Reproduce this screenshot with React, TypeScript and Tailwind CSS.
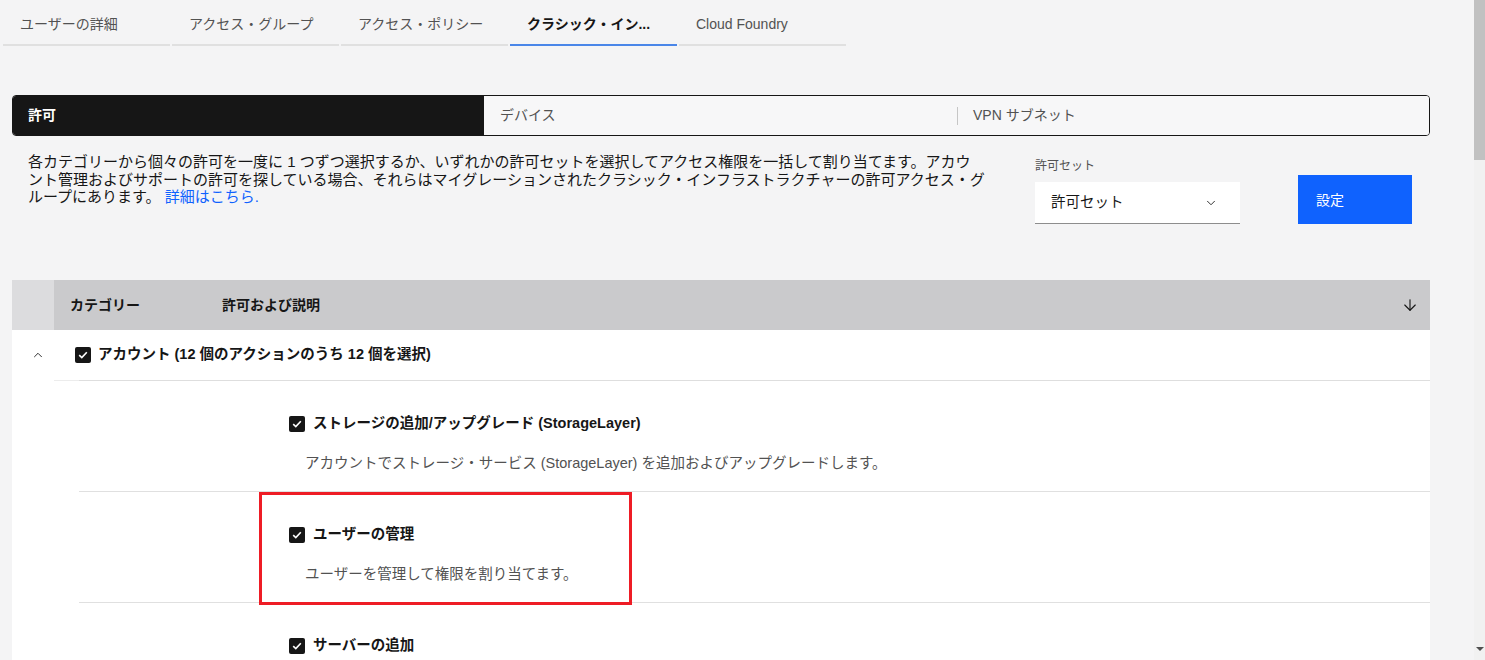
import { ArrowDown, ChevronDown, ChevronUp } from "lucide-react";

const font = "font-['Liberation_Sans','Noto_Sans_CJK_JP',sans-serif]";

const tabs = ["ユーザーの詳細", "アクセス・グループ", "アクセス・ポリシー", "クラシック・イン...", "Cloud Foundry"];

const Check = () => (
  <span className="flex h-[16px] w-[16px] shrink-0 items-center justify-center rounded-[2px] bg-[#161616]">
    <svg width="10" height="8" viewBox="0 0 10 8" fill="none">
      <path d="M1.2 4.2 3.8 6.6 8.8 1.2" stroke="#fff" strokeWidth="1.6" />
    </svg>
  </span>
);

const SubRow = ({ title, desc, marked }: { title: string; desc?: string; marked?: boolean }) => (
  <div className="relative ml-[67px] shrink-0 border-b border-[#e0e0e0] pb-[17px] pl-[210px] pt-[33px]">
    {/* annotation box over the row */}
    {marked && <div className="absolute left-[180px] top-0 h-[113px] w-[373px] border-[3px] border-[#ee1c25]" />}
    <div className="flex h-[20px] items-center gap-[8px] text-[14.5px] font-semibold text-[#161616]">
      <Check />
      <span>{title}</span>
    </div>
    {desc && <div className="mt-[20px] flex h-[20px] items-center pl-[16px] text-[14.5px] text-[#525252]">{desc}</div>}
  </div>
);

export default function App() {
  return (
    <div className={`flex h-[660px] w-full overflow-hidden bg-[#f4f4f5] ${font}`}>
      <div className="flex min-w-0 flex-1 flex-col">
        {/* Tabs */}
        <div className="flex shrink-0 gap-[2px] pl-[3px]">
          {tabs.map((t, i) => (
            <div
              key={t}
              className={`flex h-[46px] w-[167px] items-center border-b-2 px-[17px] pt-[4px] text-[14px] ${
                i === 3 ? "border-[#4a86e8] font-semibold text-[#161616]" : "border-[#e0e0e0] text-[#525252]"
              }`}
            >
              <span className="whitespace-nowrap">{t}</span>
            </div>
          ))}
        </div>

        {/* Content switcher */}
        <div className="ml-[12px] mr-[44px] mt-[49px] flex h-[41px] shrink-0 overflow-hidden rounded-[4px] border border-[#161616] text-[14px]">
          <div className="flex w-[471px] shrink-0 items-center bg-[#161616] pl-[15px] font-semibold text-white">許可</div>
          <div className="flex w-[473px] shrink-0 items-center bg-[#f7f7f8] pl-[16px] text-[#525252]">デバイス</div>
          <div className="flex min-w-0 flex-1 items-center bg-[#f7f7f8] text-[#525252]">
            <span className="mr-[15px] h-[18px] w-px bg-[#c6c6c6]" />
            VPN サブネット
          </div>
        </div>

        {/* Description + permission set */}
        <div className="flex h-[144px] shrink-0 items-start pl-[28px]">
          <div className="mt-[17px] w-[1007px] text-[15px] leading-[17.5px] text-[#161616]">
            <div className="whitespace-nowrap">
              各カテゴリーから個々の許可を一度に 1 つずつ選択するか、いずれかの許可セットを選択してアクセス権限を一括して割り当てます。アカウ
            </div>
            <div className="whitespace-nowrap">
              ント管理およびサポートの許可を探している場合、それらはマイグレーションされたクラシック・インフラストラクチャーの許可アクセス・グ
            </div>
            <div className="whitespace-nowrap">
              ループにあります。 <span className="text-[#0f62fe]">詳細はこちら.</span>
            </div>
          </div>
          <div className="mt-[22px] flex flex-col">
            <span className="h-[16px] text-[12px] leading-[16px] text-[#525252]">許可セット</span>
            <div className="mt-[8px] flex h-[42px] w-[205px] items-center justify-between border-b border-[#8d8d8d] bg-white pl-[16px] pr-[22px] text-[14.5px] text-[#161616]">
              許可セット
              <ChevronDown size={14} strokeWidth={1.5} className="text-[#161616]" />
            </div>
          </div>
          <div className="ml-[58px] mt-[39px] flex h-[49px] w-[114px] items-start bg-[#0f62fe] pl-[18px] pt-[15px] text-[14px] text-white">
            設定
          </div>
        </div>

        {/* Table */}
        <div className="ml-[12px] mr-[44px] flex shrink-0 flex-col bg-white">
          <div className="flex h-[50px] shrink-0 items-center bg-[#cacacc] text-[14px] font-semibold text-[#161616]">
            <div className="h-full w-[42px] bg-[#dcdcde]" />
            <span className="w-[168px] pl-[16px]">カテゴリー</span>
            <span className="flex-1">許可および説明</span>
            <ArrowDown size={18} strokeWidth={1.5} className="mr-[11px] text-[#161616]" />
          </div>
          <div className="flex h-[50px] shrink-0 items-center text-[14.5px] font-semibold text-[#161616]">
            <div className="flex w-[52px] justify-center">
              <ChevronUp size={14} strokeWidth={1.5} />
            </div>
            <div className="ml-[11px] flex items-center gap-[7px]">
              <Check />
              <span>アカウント (12 個のアクションのうち 12 個を選択)</span>
            </div>
          </div>
          <div className="ml-[42px] flex h-px shrink-0">
            <div className="w-[25px] bg-[#ececec]" />
            <div className="flex-1 bg-[#dedede]" />
          </div>
          <SubRow
            title="ストレージの追加/アップグレード (StorageLayer)"
            desc="アカウントでストレージ・サービス (StorageLayer) を追加およびアップグレードします。"
          />
          <SubRow title="ユーザーの管理" desc="ユーザーを管理して権限を割り当てます。" marked />
          <SubRow title="サーバーの追加" />
        </div>
      </div>

      {/* Scrollbar */}
      <div className="relative flex w-[11px] shrink-0 flex-col bg-[#f1f1f1]">
        <div className="h-[160px] bg-[#c1c1c1]" />
        <div className="absolute bottom-[9px] left-[2px] h-0 w-0 border-x-[4px] border-t-[4px] border-x-transparent border-t-[#505050]" />
      </div>
    </div>
  );
}
